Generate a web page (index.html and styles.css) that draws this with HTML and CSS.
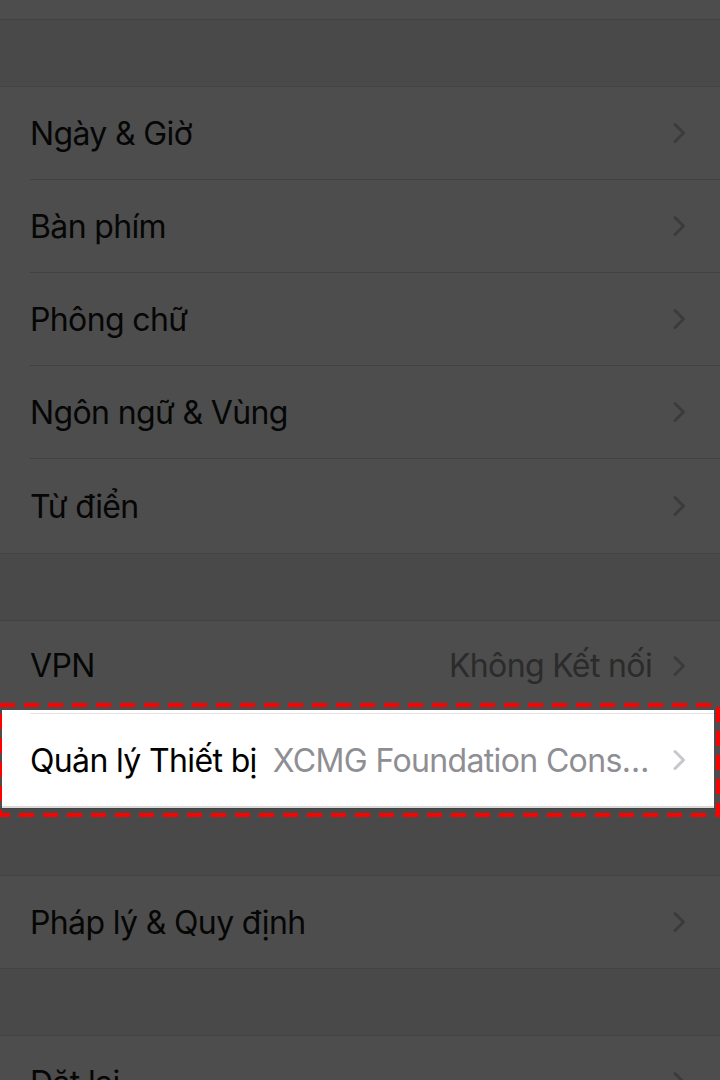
FILE: index.html
```html
<!DOCTYPE html>
<html lang="vi">
<head>
    <meta charset="UTF-8">
    <meta name="viewport" content="width=device-width, initial-scale=1.0">
    <title>Cài đặt chung</title>
    <link rel="stylesheet" href="styles.css">
</head>
<body>
    <div class="group group-top">
        <div class="row row-stub"></div>
    </div>

    <div class="group">
        <div class="row">
            <span class="label">Ngày &amp; Giờ</span>
            <svg class="chev" viewBox="0 0 14 22"><path d="M3 2.5 L11.5 11 L3 19.5"/></svg>
        </div>
        <div class="row">
            <span class="label">Bàn phím</span>
            <svg class="chev" viewBox="0 0 14 22"><path d="M3 2.5 L11.5 11 L3 19.5"/></svg>
        </div>
        <div class="row">
            <span class="label">Phông chữ</span>
            <svg class="chev" viewBox="0 0 14 22"><path d="M3 2.5 L11.5 11 L3 19.5"/></svg>
        </div>
        <div class="row">
            <span class="label">Ngôn ngữ &amp; Vùng</span>
            <svg class="chev" viewBox="0 0 14 22"><path d="M3 2.5 L11.5 11 L3 19.5"/></svg>
        </div>
        <div class="row row-last row-tall">
            <span class="label">Từ điển</span>
            <svg class="chev" viewBox="0 0 14 22"><path d="M3 2.5 L11.5 11 L3 19.5"/></svg>
        </div>
    </div>

    <div class="group">
        <div class="row row-vpn">
            <span class="label">VPN</span>
            <span class="value">Không Kết nối</span>
            <svg class="chev" viewBox="0 0 14 22"><path d="M3 2.5 L11.5 11 L3 19.5"/></svg>
        </div>
        <div class="row-hl">
            <div class="hl-inner">
                <span class="label">Quản lý Thiết bị</span>
                <span class="value">XCMG Foundation Construction Machinery</span>
                <svg class="chev" viewBox="0 0 14 22"><path d="M3 2.5 L11.5 11 L3 19.5"/></svg>
            </div>
            <svg class="outline" width="722" height="114" viewBox="0 0 722 114">
                <rect x="2" y="2" width="718" height="110"/>
            </svg>
        </div>
    </div>

    <div class="group">
        <div class="row row-last">
            <span class="label">Pháp lý &amp; Quy định</span>
            <svg class="chev" viewBox="0 0 14 22"><path d="M3 2.5 L11.5 11 L3 19.5"/></svg>
        </div>
    </div>

    <div class="group">
        <div class="row row-last">
            <span class="label">Đặt lại</span>
            <svg class="chev" viewBox="0 0 14 22"><path d="M3 2.5 L11.5 11 L3 19.5"/></svg>
        </div>
    </div>
</body>
</html>
```

FILE: styles.css
```css
body {
  font-family: Inter, "Noto Sans", sans-serif;
  margin: 0;
  padding: 0;
  background-color: #494949;
  width: 720px;
}

.group {
  background-color: #4d4d4d;
  border-top: 1px solid #434343;
  border-bottom: 1px solid #434343;
  margin-bottom: 66px;
}

.group-top {
  border-top: none;
}

.row {
  display: flex;
  align-items: center;
  height: 93px;
  margin-left: 30px;
  padding: 0 34px 0 0;
  border-bottom: 1px solid #414141;
  box-sizing: border-box;
}

.row-last {
  border-bottom: none;
  height: 92px;
}

.row-tall {
  height: 94px;
}

.row-stub {
  height: 19px;
  border-bottom: none;
}

.row-vpn {
  border-bottom: none;
  height: 89px;
}

.label {
  font-size: 32px;
  letter-spacing: -0.02em;
  color: #060606;
  white-space: nowrap;
}

.value {
  flex: 1;
  min-width: 0;
  margin-left: 18px;
  margin-right: 20px;
  font-size: 32px;
  letter-spacing: -0.02em;
  color: #2b2b2b;
  text-align: right;
  white-space: nowrap;
  overflow: hidden;
  text-overflow: ellipsis;
}

.chev {
  width: 14px;
  height: 22px;
  margin-left: auto;
  flex-shrink: 0;
}

.value + .chev {
  margin-left: 0;
}

.chev path {
  fill: none;
  stroke: #3b3b3b;
  stroke-width: 3;
  stroke-linecap: round;
  stroke-linejoin: round;
}

/* highlighted row */
.row-hl {
  position: relative;
  background-color: #fff;
  margin: 0 6px 0 2px;
  padding: 3px 0 0;
  height: 98px;
  box-sizing: border-box;
  border-bottom: 2px solid #dadada;
}

.hl-inner {
  display: flex;
  align-items: center;
  height: 93px;
  margin-left: 28px;
  padding: 0 28px 0 0;
  border-top: 1px solid #e4e4e4;
  box-sizing: border-box;
}

.row-hl .label {
  color: #000;
}

.row-hl .value {
  color: #8e8e93;
  margin-left: 16px;
}

.row-hl .chev path {
  stroke: #c7c7cc;
}

.outline {
  position: absolute;
  left: -4px;
  top: -7px;
  pointer-events: none;
}

.outline rect {
  fill: none;
  stroke: #ff0000;
  stroke-width: 4;
  stroke-dasharray: 15 9;
}
```
